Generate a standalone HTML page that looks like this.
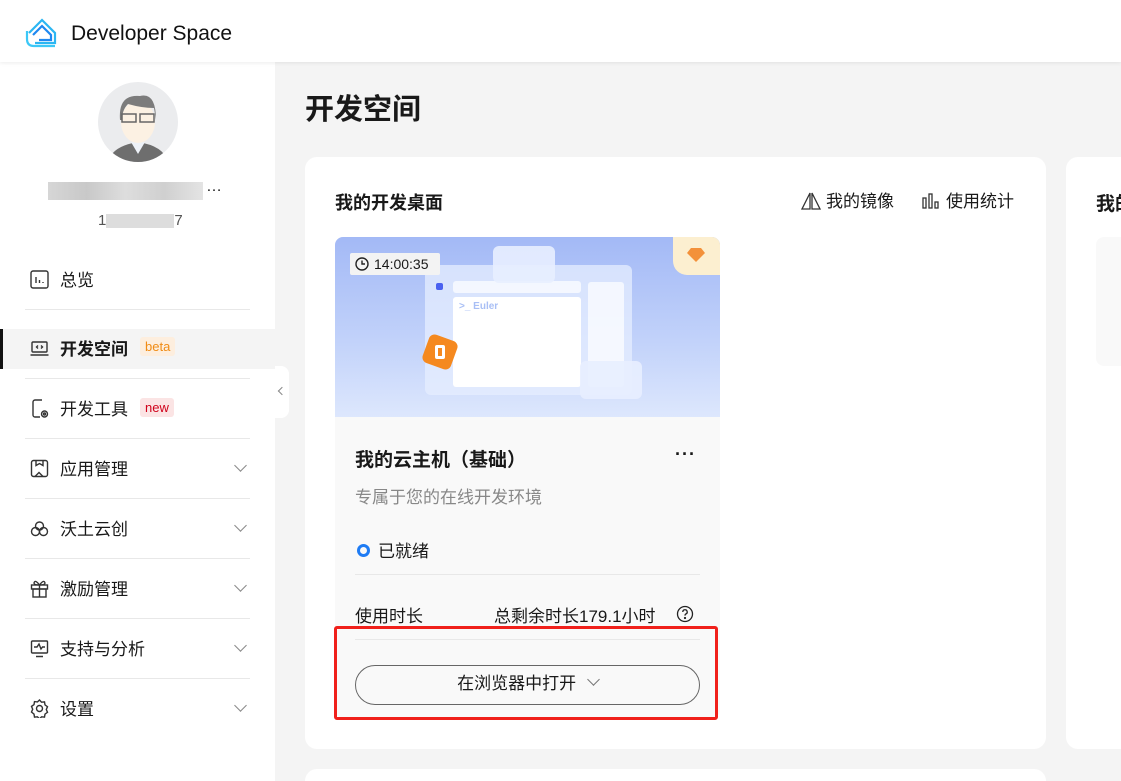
<!DOCTYPE html>
<html><head><meta charset="utf-8"><style>
*{margin:0;padding:0;box-sizing:border-box}
html,body{width:1121px;height:781px;overflow:hidden}
body{background:#f4f4f4;font-family:"Liberation Sans","Noto Sans CJK SC",sans-serif;color:#191919;position:relative;white-space:nowrap}
.hdr{position:absolute;left:0;top:0;width:1121px;height:62px;background:#fff;box-shadow:0 1px 4px rgba(0,0,0,.08);z-index:2}
.hdr .t{position:absolute;left:71px;top:22px;font-size:21px;color:#111}
.side{position:absolute;left:0;top:62px;width:275px;height:719px;background:#fff}
.av{position:absolute;left:98px;top:82px;width:80px;height:80px;border-radius:50%;background:#ebecee;overflow:hidden}
.nav{position:absolute;left:0;width:275px;height:60px}
.nav .ic{position:absolute;left:30px;top:20px;width:19px;height:19px}
.nav .lb{position:absolute;left:60px;top:16px;font-size:17px}
.nav .ln{position:absolute;left:25px;right:25px;bottom:0;height:1px;background:#e8e8e8}
.nav .ch{position:absolute;left:236px;top:22px;width:9px;height:9px;border-right:1.5px solid #888;border-bottom:1.5px solid #888;transform:rotate(45deg)}
.tag{position:absolute;top:18px;font-size:13px;padding:2px 5px;border-radius:3px}
.panel{position:absolute;left:305px;top:157px;width:741px;height:592px;background:#fff;border-radius:12px}
.panel2{position:absolute;left:1066px;top:157px;width:80px;height:592px;background:#fff;border-radius:12px}
.card{position:absolute;left:335px;top:237px;width:385px;height:481px;background:#f9f9f9;border-radius:8px;overflow:hidden}
.img{position:absolute;left:0;top:0;width:385px;height:180px;background:linear-gradient(180deg,#a3b9f6 0%,#c3d3fa 60%,#dde7fd 100%)}
</style></head><body>
<div class="hdr">
<svg style="position:absolute;left:25px;top:15px" width="34" height="34" viewBox="0 0 34 34" fill="none" stroke-width="2.2"><path d="M4 18 L17 5 L30 18 V28 H10" stroke="#2bb6f2"/><path d="M8 20 L17 11 L26 20 V25 H14" stroke="#1e88f0"/><path d="M2 16 V24 Q2 31 9 31 H30" stroke="#3cc8f7"/></svg>
<div class="t">Developer Space</div></div>
<div class="side">
<div class="av" style="top:20px"><svg width="80" height="80" viewBox="0 0 80 80"><path d="M10 80 Q14 64 40 60 Q66 64 70 80Z" fill="#6e6e6e"/><path d="M33 60 L40 72 L47 60Z" fill="#eef2f8"/><ellipse cx="40" cy="40" rx="17" ry="21" fill="#fcf1e3"/><path d="M22 38 Q20 12 42 14 Q58 10 58 38 L56 26 Q44 26 30 22 Q24 28 24 38Z" fill="#7c7c7c"/><rect x="24" y="32" width="14" height="8" fill="none" stroke="#666" stroke-width="1.5"/><rect x="42" y="32" width="14" height="8" fill="none" stroke="#666" stroke-width="1.5"/></svg></div>
<div style="position:absolute;left:48px;top:120px;width:155px;height:18px;background:linear-gradient(90deg,#ccc,#bbb,#d5d5d5,#c4c4c4,#ddd);opacity:.8"></div>
<div style="position:absolute;left:206px;top:116px;font-size:16px">…</div>
<div style="position:absolute;left:98px;top:150px;font-size:15px;color:#555">1<span style="display:inline-block;width:68px;height:14px;background:#ddd;vertical-align:middle"></span>7</div>
</div>
<div class="nav" style="top:250px"><svg class="ic" viewBox="0 0 19 19" fill="none" stroke="#333" stroke-width="1.4"><rect x="1" y="1" width="17" height="17" rx="2"/><path d="M6 7v6M9.5 10v3M13 12v1"/></svg><div class="lb">总览</div><div class="ln"></div></div>
<div style="position:absolute;left:0;top:329px;width:275px;height:40px;background:#f4f4f4;border-left:3px solid #111"></div>
<div class="nav" style="top:319px"><svg class="ic" viewBox="0 0 19 19" fill="none" stroke="#333" stroke-width="1.4"><rect x="2" y="3" width="15" height="10" rx="1"/><path d="M0.5 16h18M8 6.5l-1.5 1.5 1.5 1.5M11 6.5l1.5 1.5-1.5 1.5"/></svg><div class="lb" style="font-weight:bold">开发空间</div><div class="tag" style="left:140px;background:#fdeede;color:#f08b14;top:18px">beta</div><div class="ln"></div></div>
<div class="nav" style="top:379px"><svg class="ic" viewBox="0 0 19 19" fill="none" stroke="#333" stroke-width="1.4"><path d="M12 1H5a2 2 0 0 0-2 2v13a2 2 0 0 0 2 2h5"/><circle cx="14.5" cy="15" r="3"/><circle cx="14.5" cy="15" r="1"/></svg><div class="lb">开发工具</div><div class="tag" style="left:140px;background:#fbe4e4;color:#d0021b;top:19px">new</div><div class="ln"></div></div>
<div class="nav" style="top:439px"><svg class="ic" viewBox="0 0 19 19" fill="none" stroke="#333" stroke-width="1.4"><rect x="1.5" y="1.5" width="16" height="16" rx="2"/><path d="M6 1.5v5l3.5-2 3.5 2v-5M5 17.5l4-4 4 4"/></svg><div class="lb">应用管理</div><div class="ch"></div><div class="ln"></div></div>
<div class="nav" style="top:499px"><svg class="ic" viewBox="0 0 19 19" fill="none" stroke="#333" stroke-width="1.4"><circle cx="9.5" cy="7" r="4"/><circle cx="5.5" cy="12.5" r="4"/><circle cx="13.5" cy="12.5" r="4"/></svg><div class="lb">沃土云创</div><div class="ch"></div><div class="ln"></div></div>
<div class="nav" style="top:559px"><svg class="ic" viewBox="0 0 19 19" fill="none" stroke="#333" stroke-width="1.4"><rect x="1.5" y="6" width="16" height="4"/><rect x="3" y="10" width="13" height="8"/><path d="M9.5 6v12M9.5 6Q5 0 4 4Q4 6 9.5 6Q15 6 15 4Q14 0 9.5 6"/></svg><div class="lb">激励管理</div><div class="ch"></div><div class="ln"></div></div>
<div class="nav" style="top:619px"><svg class="ic" viewBox="0 0 19 19" fill="none" stroke="#333" stroke-width="1.4"><rect x="1.5" y="2" width="16" height="12" rx="1"/><path d="M4 8h3l2-3 2 5 1.5-2H15M6 17.5h7"/></svg><div class="lb">支持与分析</div><div class="ch"></div><div class="ln"></div></div>
<div class="nav" style="top:679px"><svg class="ic" viewBox="0 0 19 19" fill="none" stroke="#333" stroke-width="1.4"><circle cx="9.5" cy="9.5" r="3"/><path d="M9.5 1l2 2.2 3-.3.5 3 2.5 1.8-1.2 2.8 1.2 2.8-2.5 1.8-.5 3-3-.3-2 2.2-2-2.2-3 .3-.5-3L1.5 13l1.2-2.8L1.5 7.4 4 5.6l.5-3 3 .3z"/></svg><div class="lb">设置</div><div class="ch"></div></div>
<div style="position:absolute;left:275px;top:366px;width:14px;height:52px;background:#fff;border-radius:0 8px 8px 0"></div>
<div style="position:absolute;left:279px;top:388px;width:6px;height:6px;border-left:1.3px solid #888;border-bottom:1.3px solid #888;transform:rotate(45deg)"></div>
<div style="position:absolute;left:305px;top:86px;font-size:29px;font-weight:bold">开发空间</div>
<div class="panel"></div><div class="panel2"></div>
<div style="position:absolute;left:1096px;top:189px;font-size:19px;font-weight:bold">我的</div>
<div style="position:absolute;left:1096px;top:237px;width:40px;height:129px;background:#f9f9f9;border-radius:8px"></div>
<div style="position:absolute;left:335px;top:189px;font-size:18px;font-weight:bold">我的开发桌面</div>
<svg style="position:absolute;left:801px;top:192px" width="20" height="18" viewBox="0 0 20 18" fill="none" stroke="#333" stroke-width="1.3"><path d="M9 1L1 17h8zM11 1l8 16h-8z"/></svg>
<div style="position:absolute;left:826px;top:187px;font-size:17px">我的镜像</div>
<svg style="position:absolute;left:922px;top:193px" width="18" height="16" viewBox="0 0 18 16" fill="none" stroke="#333" stroke-width="1.3"><rect x="1" y="5" width="3" height="10"/><rect x="7" y="1" width="3" height="14"/><rect x="13" y="9" width="3" height="6"/></svg>
<div style="position:absolute;left:946px;top:187px;font-size:17px">使用统计</div>
<div class="card">
<div class="img">
<div style="position:absolute;left:90px;top:28px;width:207px;height:130px;background:rgba(230,238,255,.75);border-radius:6px"></div>
<div style="position:absolute;left:118px;top:60px;width:128px;height:90px;background:#fff;border-radius:3px"></div>
<div style="position:absolute;left:118px;top:44px;width:128px;height:12px;background:rgba(255,255,255,.7);border-radius:3px"></div>
<div style="position:absolute;left:124px;top:64px;font-size:10px;color:#a9bff5;font-weight:bold">&gt;_ Euler</div>
<div style="position:absolute;left:101px;top:46px;width:7px;height:7px;background:#4a61f0;border-radius:2px"></div>
<div style="position:absolute;left:253px;top:45px;width:36px;height:105px;background:rgba(255,255,255,.7);border-radius:3px"></div>
<div style="position:absolute;left:158px;top:9px;width:62px;height:37px;background:rgba(232,238,255,.9);border-radius:6px"></div>
<div style="position:absolute;left:245px;top:124px;width:62px;height:38px;background:rgba(232,238,255,.9);border-radius:6px"></div>
<div style="position:absolute;left:90px;top:100px;width:30px;height:30px;background:#f5891f;border-radius:6px;transform:rotate(20deg)"></div>
<div style="position:absolute;left:100px;top:108px;width:10px;height:14px;border:3px solid #fff;border-radius:2px"></div>
<div style="position:absolute;left:15px;top:16px;width:90px;height:22px;background:#f3f3f3;border-radius:2px;font-size:14px;line-height:22px;padding-left:24px">14:00:35</div>
<svg style="position:absolute;left:20px;top:20px" width="14" height="14" viewBox="0 0 14 14" fill="none" stroke="#222" stroke-width="1.4"><circle cx="7" cy="7" r="6"/><path d="M7 3.5V7h3"/></svg>
<div style="position:absolute;left:338px;top:0;width:47px;height:38px;background:#fcefd0;border-radius:0 0 0 14px"></div>
<svg style="position:absolute;left:352px;top:11px" width="18" height="14" viewBox="0 0 18 14"><path d="M4 0h10l4 5-9 9-9-9z" fill="#f3913a"/></svg>
</div>
<div style="position:absolute;left:20px;top:208px;font-size:19px;font-weight:bold">我的云主机（基础）</div>
<div style="position:absolute;left:340px;top:207px;font-size:18px;font-weight:bold;letter-spacing:1px">···</div>
<div style="position:absolute;left:20px;top:246px;font-size:17px;color:#888">专属于您的在线开发环境</div>
<div style="position:absolute;left:22px;top:307px;width:13px;height:13px;border:3px solid #1f7cf4;border-radius:50%"></div>
<div style="position:absolute;left:43px;top:300px;font-size:17px">已就绪</div>
<div style="position:absolute;left:20px;right:20px;top:337px;height:1px;background:#e8e8e8"></div>
<div style="position:absolute;left:20px;top:365px;font-size:17px">使用时长</div>
<div style="position:absolute;left:159px;top:365px;font-size:17px">总剩余时长179.1小时</div>
<svg style="position:absolute;left:341px;top:368px" width="18" height="18" viewBox="0 0 18 18" fill="none" stroke="#222" stroke-width="1.3"><circle cx="9" cy="9" r="7.5"/><path d="M6.8 7a2.2 2.2 0 1 1 3 2c-.7.3-.8.8-.8 1.6"/><circle cx="9" cy="13" r=".5" fill="#222"/></svg>
<div style="position:absolute;left:20px;right:20px;top:402px;height:1px;background:#e8e8e8"></div>
<div style="position:absolute;left:20px;top:428px;width:345px;height:40px;border:1px solid #666;border-radius:20px;text-align:center;font-size:17px;line-height:36px">在浏览器中打开 <span style="display:inline-block;width:9px;height:9px;border-right:1.3px solid #777;border-bottom:1.3px solid #777;transform:rotate(45deg);margin:0 0 5px 8px"></span></div>
</div>
<div style="position:absolute;left:334px;top:626px;width:384px;height:94px;border:3px solid #f0201b;border-radius:3px"></div>
<div style="position:absolute;left:305px;top:769px;width:741px;height:12px;background:#fff;border-radius:12px 12px 0 0"></div>
</body></html>
